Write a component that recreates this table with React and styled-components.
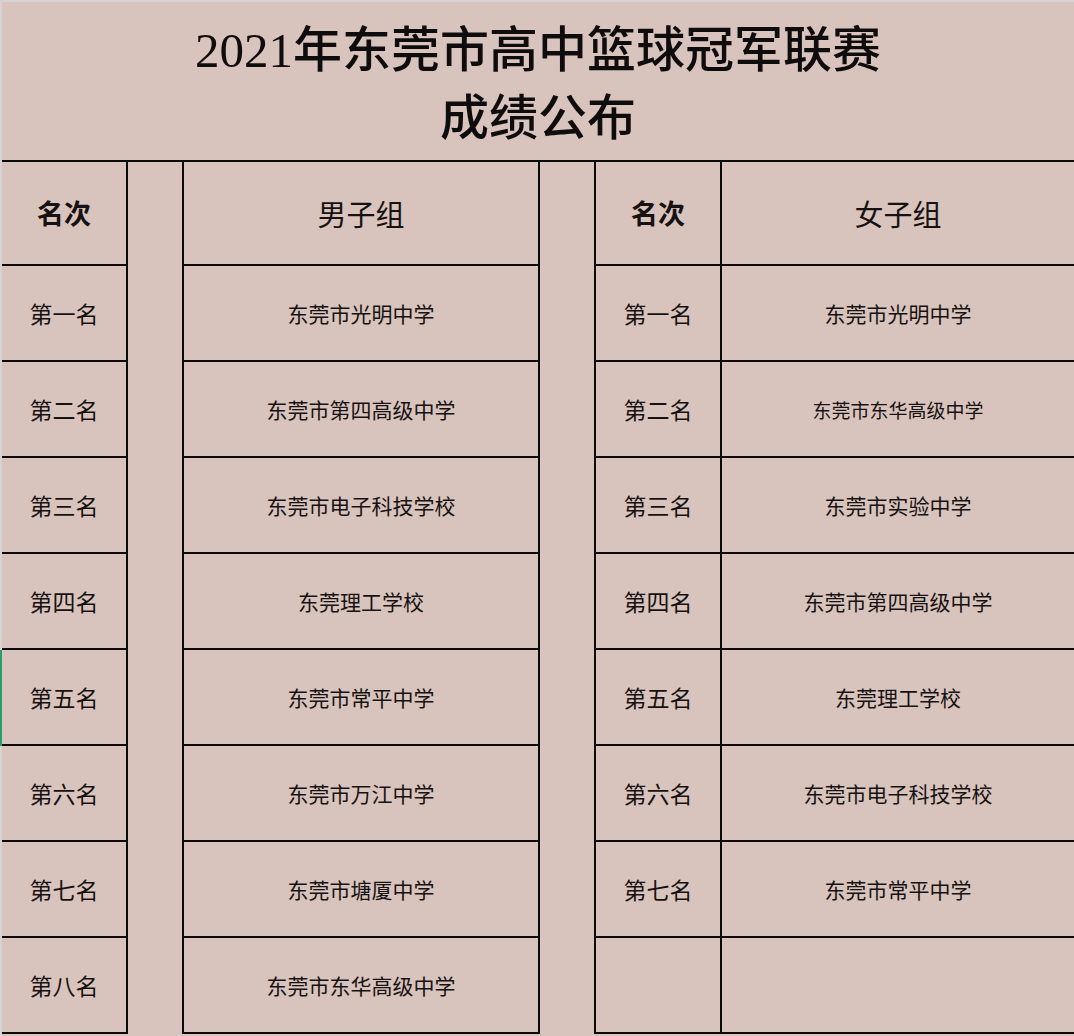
import styled, { createGlobalStyle } from "styled-components";

const GlobalStyle = createGlobalStyle`
  html, body {
    margin: 0;
    padding: 0;
    background: #d9c4bd;
  }
`;

const boys = [
  "东莞市光明中学",
  "东莞市第四高级中学",
  "东莞市电子科技学校",
  "东莞理工学校",
  "东莞市常平中学",
  "东莞市万江中学",
  "东莞市塘厦中学",
  "东莞市东华高级中学",
];

const girls = [
  "东莞市光明中学",
  "东莞市东华高级中学",
  "东莞市实验中学",
  "东莞市第四高级中学",
  "东莞理工学校",
  "东莞市电子科技学校",
  "东莞市常平中学",
  "",
];

const ranks = ["第一名", "第二名", "第三名", "第四名", "第五名", "第六名", "第七名", "第八名"];

const App = () => {
  return (
    <>
      <GlobalStyle />
      <Page>
        {/* big two line heading */}
        <TitleBlock>
          <TitleLine>2021年东莞市高中篮球冠军联赛</TitleLine>
          <TitleLine>成绩公布</TitleLine>
        </TitleBlock>

        <Board>
          <Spacer $col={2} />
          <Spacer $col={4} />

          <HeadCell $bold>名次</HeadCell>
          <HeadCell>男子组</HeadCell>
          <HeadCell $bold>名次</HeadCell>
          <HeadCell $last>女子组</HeadCell>

          {ranks.map((r, i) => (
            <Row key={r}>
              <RankCell $marked={i === 4}>{r}</RankCell>
              <SchoolCell>{boys[i]}</SchoolCell>
              <RankCell>{girls[i] ? r : ""}</RankCell>
              <SchoolCell $last $small={girls[i] === "东莞市东华高级中学"}>
                {girls[i]}
              </SchoolCell>
            </Row>
          ))}
        </Board>
      </Page>
    </>
  );
};

const Row = styled.div`
  display: contents;
`;

const Page = styled.div`
  width: 1072px;
  height: 1034px;
  border-top: 2px solid #d6d3d2;
  border-left: 2px solid #d6d3d2;
  display: flex;
  flex-direction: column;
`;

const TitleBlock = styled.div`
  height: 158px;
  display: flex;
  flex-direction: column;
  align-items: center;
  justify-content: center;
  padding-top: 8px;
  box-sizing: border-box;
`;

const TitleLine = styled.div`
  font-family: "Liberation Serif", "Noto Sans CJK SC", serif;
  font-size: 49px;
  font-weight: 500;
  line-height: 68px;
  color: #0e0c0c;
`;

const Board = styled.div`
  display: grid;
  grid-template-columns: 126px 56px 356px 56px 126px 352px;
  grid-template-rows: 104px repeat(8, 96px);
  border-top: 2px solid #0a0a0a;
`;

const Spacer = styled.div`
  grid-column: ${(p) => p.$col};
  grid-row: 1 / span 9;
  border-right: 2px solid #0a0a0a;
`;

const Cell = styled.div`
  display: flex;
  align-items: center;
  justify-content: center;
  border-bottom: 2px solid #0a0a0a;
  border-right: ${(p) => (p.$last ? "none" : "2px solid #0a0a0a")};
  color: #161212;
  white-space: nowrap;
`;

const HeadCell = styled(Cell)`
  font-family: "Noto Sans CJK SC", sans-serif;
  font-size: ${(p) => (p.$bold ? "27px" : "29px")};
  font-weight: ${(p) => (p.$bold ? 700 : 400)};
  padding-bottom: ${(p) => (p.$bold ? "2px" : "0")};
`;

const RankCell = styled(Cell)`
  font-family: "Noto Sans CJK SC", sans-serif;
  font-size: 23px;
  box-shadow: ${(p) => (p.$marked ? "-2px 0 0 #21a366" : "none")};
`;

const SchoolCell = styled(Cell)`
  font-family: "Noto Sans CJK SC", sans-serif;
  font-size: ${(p) => (p.$small ? "19px" : "21px")};
`;

export default App;
